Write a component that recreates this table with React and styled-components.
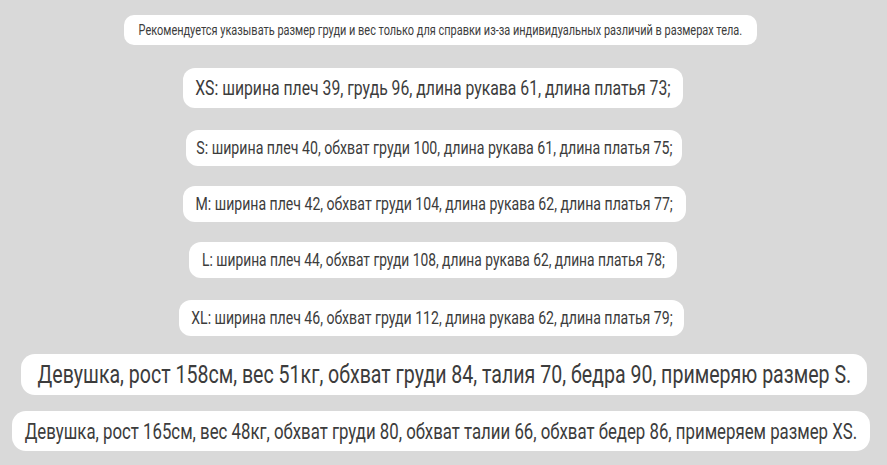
import React from "react";
import styled, { createGlobalStyle } from "styled-components";

const Global = createGlobalStyle`
  html, body { margin: 0; padding: 0; }
  body {
    background: #d9d9d9;
    font-family: Roboto, "Liberation Sans", sans-serif;
  }
`;

const Page = styled.div`
  width: 887px;
  height: 465px;
  box-sizing: border-box;
  padding-top: 15px;
  display: flex;
  flex-direction: column;
  align-items: center;
  overflow: hidden;
`;

const Pill = styled.div`
  box-sizing: border-box;
  flex: none;
  width: ${(p) => p.$w}px;
  height: ${(p) => p.$h}px;
  margin-top: ${(p) => p.$mt}px;
  margin-left: ${(p) => (p.$shift > 0 ? p.$shift * 2 : 0)}px;
  margin-right: ${(p) => (p.$shift < 0 ? -p.$shift * 2 : 0)}px;
  border-radius: ${(p) => p.$r}px;
  background: #ffffff;
  display: flex;
  align-items: center;
  justify-content: center;
`;

const Label = styled.span`
  flex: none;
  display: inline-block;
  white-space: nowrap;
  color: #3c3c3c;
  font-size: ${(p) => p.$fs}px;
  line-height: 1;
  transform: scaleX(${(p) => p.$sx});
  transform-origin: center;
`;

const rows = [
  { t: "Рекомендуется указывать размер груди и вес только для справки из-за индивидуальных различий в размерах тела.", mt: 0, w: 633, h: 30, r: 10, fs: 14.6, shift: -3 },
  { t: "XS: ширина плеч 39, грудь 96, длина рукава 61, длина платья 73;", mt: 23, w: 500, h: 40, r: 12, fs: 21, shift: -10.5 },
  { t: "S: ширина плеч 40, обхват груди 100, длина рукава 61, длина платья 75;", mt: 22, w: 496, h: 36, r: 12, fs: 18.9, shift: -9.5 },
  { t: "M: ширина плеч 42, обхват груди 104, длина рукава 62, длина платья 77;", mt: 20, w: 503, h: 36, r: 12, fs: 18.8, shift: -9 },
  { t: "L: ширина плеч 44, обхват груди 108, длина рукава 62, длина платья 78;", mt: 20, w: 488, h: 36, r: 12, fs: 18.4, shift: -10.5 },
  { t: "XL: ширина плеч 46, обхват груди 112, длина рукава 62, длина платья 79;", mt: 22, w: 505, h: 36, r: 12, fs: 18.8, shift: -12 },
  { t: "Девушка, рост 158см, вес 51кг, обхват груди 84, талия 70, бедра 90, примеряю размер S.", mt: 18, w: 846, h: 41, r: 14, fs: 26.1, shift: 0.5 },
  { t: "Девушка, рост 165см, вес 48кг, обхват груди 80, обхват талии 66, обхват бедер 86, примеряем размер XS.", mt: 16, w: 858, h: 40, r: 14, fs: 22.4, shift: -2.5 },
];

const SX = 0.75;

export default function App() {
  return (
    <>
      <Global />
      <Page>
        {rows.map((r, i) => (
          <Pill key={i} $mt={r.mt} $w={r.w} $h={r.h} $r={r.r} $shift={r.shift}>
            <Label $fs={r.fs} $sx={SX}>{r.t}</Label>
          </Pill>
        ))}
      </Page>
    </>
  );
}
